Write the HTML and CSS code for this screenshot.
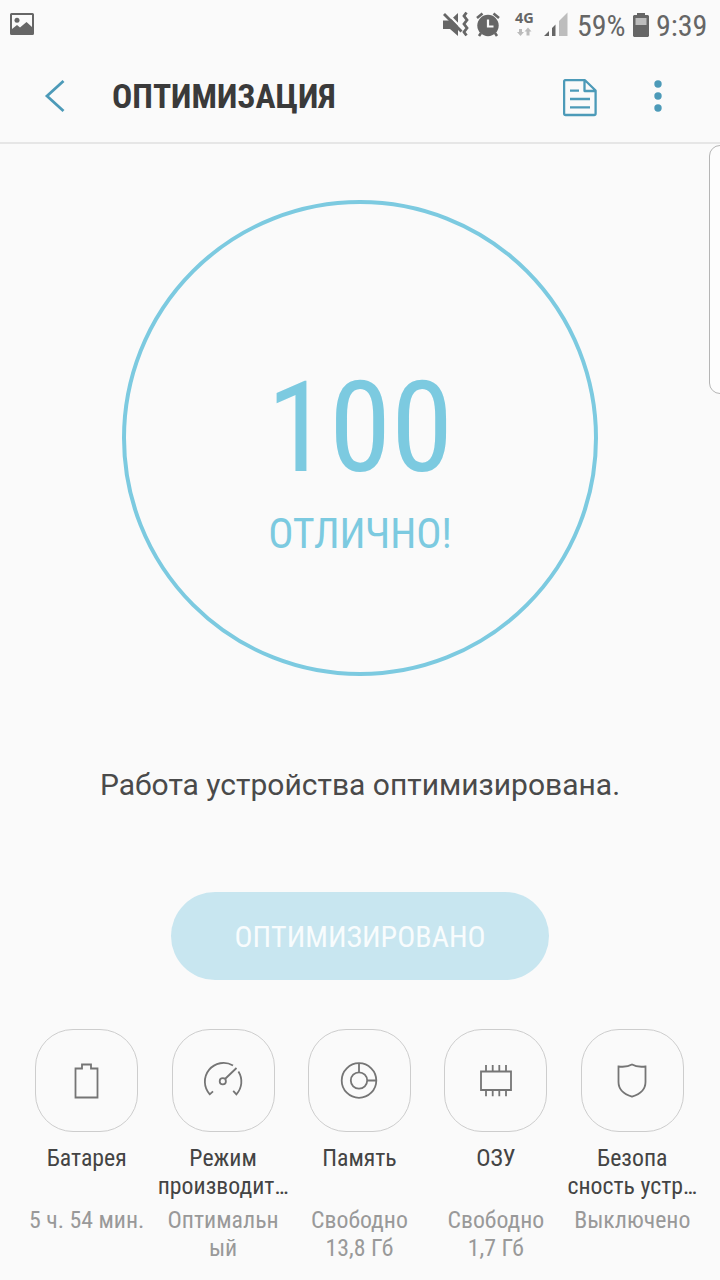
FILE: index.html
```html
<!DOCTYPE html>
<html lang="ru">
<head>
<meta charset="utf-8">
<title>Оптимизация</title>
<link rel="stylesheet" href="styles.css">
</head>
<body>
<div class="screen">
  <div class="status">
    <svg class="status-pic" width="24" height="22" viewBox="0 0 24 22"><path fill="#666" fill-rule="evenodd" d="M1.500 0h21Q24 0 24 1.500v19Q24 22 22.500 22h-21Q0 22 0 20.500v-19Q0 0 1.500 0zM2 2v14l5-4 3 2.500 6.500-5.500 5.500 5V2z"/><circle cx="7" cy="7.300" r="2.500" fill="#666"/></svg>
    <svg class="status-icons" width="140" height="28" viewBox="437 11 140 28">
      <path fill="#666" d="M443 20.500h7l8-7.500v23l-8-7h-7z"/>
      <path d="M446 12l17 17.500" stroke="#fafafa" stroke-width="2.400"/>
      <path d="M444 14l17.500 17.500" stroke="#666" stroke-width="2.800"/>
      <path d="M466.500 12.500l-2.500 3.500 3 4-3 4 3 4-3 4 2.500 3.500" fill="none" stroke="#666" stroke-width="2.800"/>
      <circle cx="488" cy="25.500" r="10.700" fill="#666"/>
      <path d="M477 18l5.500-4.500M499 18l-5.500-4.500M481 33l-2 3M495 33l2 3" stroke="#666" stroke-width="2.600"/>
      <path d="M488 19.500v7h5.500" fill="none" stroke="#fafafa" stroke-width="2.200"/>
      <path fill="#bbb" d="M519 29h3v3h2l-3.500 4-3.500-4h2zM526.500 35.500v-4h-2l3.500-4 3.500 4h-2v4z"/>
      <path fill="#666" d="M544 36l5-5v5zM552 36v-8l3.500-3.500V36z"/>
      <path fill="#bdbdbd" d="M559 36V21l8.500-8.500V36z"/>
    </svg>
    <span class="net">4G</span>
    <span class="percent">59%</span>
    <svg class="status-battery" width="16" height="24" viewBox="0 0 16 24"><path fill="#666" d="M4 0h8v2h3l1 1v20l-1 1H1l-1-1V3l1-1h3z"/><path fill="#bdbdbd" d="M2.500 5h11v7h-11z"/></svg>
    <span class="clock">9:39</span>
  </div>
  <header class="header">
    <svg class="back" width="22" height="34" viewBox="0 0 22 34"><path d="M19.500 2L3 17l16.500 15" fill="none" stroke="#4c9ab8" stroke-width="2.800"/></svg>
    <h1 class="title">ОПТИМИЗАЦИЯ</h1>
    <svg class="doc" width="34" height="38" viewBox="0 0 34 38" fill="none" stroke="#4c9ab8" stroke-width="2.300"><path stroke-linejoin="round" d="M2.600 1.200h19.400l10.600 10.300V34.500q0 1.500-1.500 1.500H2.600q-1.500 0-1.500-1.500V2.600q0-1.500 1.500-1.500zM21.500 1.500v10.500h10.500"/><path d="M7 11.700h9M7 20h20M7 28.300h20"/></svg>
    <svg class="more" width="8" height="32" viewBox="0 0 8 32" fill="#4c9ab8"><circle cx="4" cy="4" r="3.700"/><circle cx="4" cy="16" r="3.700"/><circle cx="4" cy="28" r="3.700"/></svg>
  </header>
  <main class="main">
    <div class="ring">
      <div class="score">100</div>
      <div class="verdict">ОТЛИЧНО!</div>
    </div>
    <p class="message">Работа устройства оптимизирована.</p>
    <button class="action">ОПТИМИЗИРОВАНО</button>
    <div class="tiles">
      <div class="tile">
        <div class="tile-box"><svg width="48" height="48" viewBox="0 0 48 48"><path d="M12.500 11.500h6.500v-4h9v4h6.500v29h-22z"/></svg></div>
        <div class="name">Батарея</div><div class="info">5 ч. 54 мин.</div>
      </div>
      <div class="tile">
        <div class="tile-box"><svg width="48" height="48" viewBox="0 0 48 48"><path d="M34 8.500A18.700 18.700 0 0 0 10.800 37.300l3.200-3M39.400 14.500A18.700 18.700 0 0 1 37.400 37.300l-3.200-3.500M26 22L37.500 11"/><circle cx="23.800" cy="24.300" r="3.100"/></svg></div>
        <div class="name">Режим<br>производит…</div><div class="info">Оптимальн<br>ый</div>
      </div>
      <div class="tile">
        <div class="tile-box"><svg width="48" height="48" viewBox="0 0 48 48"><circle cx="24" cy="23.500" r="17.300"/><circle cx="24" cy="23.500" r="8.200"/><path d="M24 6.200v9.100M32.200 23.500h9.100"/></svg></div>
        <div class="name">Память</div><div class="info">Свободно<br>13,8 Гб</div>
      </div>
      <div class="tile">
        <div class="tile-box"><svg width="48" height="48" viewBox="0 0 48 48"><path d="M9 14.500h30v18.500H9zM14 8v6.500M20.700 8v6.500M27.300 8v6.500M34 8v6.500M14 33v6.200M20.700 33v6.200M27.300 33v6.200M34 33v6.200"/></svg></div>
        <div class="name">ОЗУ</div><div class="info">Свободно<br>1,7 Гб</div>
      </div>
      <div class="tile">
        <div class="tile-box"><svg width="48" height="48" viewBox="0 0 48 48"><path d="M10.500 9.500Q19 10.500 24 7.500 29 10.500 37.500 9.500V25Q37.500 35.500 24 39.700 10.500 35.500 10.500 25z"/></svg></div>
        <div class="name">Безопа<br>сность устр…</div><div class="info">Выключено</div>
      </div>
    </div>
  </main>
  <div class="edge-handle"></div>
</div>
</body>
</html>
```
FILE: styles.css
```css
* { box-sizing: border-box; }
body {
  margin: 0;
  background: #fafafa;
  font-family: "Roboto Condensed", Roboto, "Liberation Sans", sans-serif;
  font-stretch: 75%;
}
.screen {
  position: relative;
  width: 720px;
  height: 1280px;
  overflow: hidden;
}
.status {
  position: relative;
  display: flex;
  align-items: center;
  height: 50px;
  padding: 0 10px;
  color: #666;
  font-size: 30px;
  white-space: nowrap;
}
.status-pic { margin-top: -2px; }
.status-icons { margin-left: 403px; }
.percent { width: 47px; }
.status-battery { margin: 0 7px 0 9px; }
/* network type sits over the data arrows */
.net {
  position: absolute;
  top: 8px;
  left: 515px;
  font: bold 14.500px/20px "Open Sans", sans-serif;
}
.header {
  display: flex;
  align-items: center;
  height: 94px;
  padding: 0 58px 0 44px;
  border-bottom: 2px solid #e6e6e6;
}
.title {
  flex: 1;
  margin: 2px 0 0 46px;
  color: #3a3a3a;
  font-size: 33.600px;
  font-weight: 700;
  line-height: 40px;
}
.doc { margin: 3px 57px 0 0; }
.main {
  display: flex;
  flex-direction: column;
  align-items: center;
  padding-top: 56px;
}
.ring {
  width: 476px;
  height: 476px;
  padding-top: 164px;
  border: 4px solid #7ccae0;
  border-radius: 50%;
  color: #7ccae0;
  text-align: center;
}
.score { font-size: 126px; line-height: 120px; }
.verdict { margin-top: 21px; font-size: 42px; line-height: 50px; }
.message {
  margin: 89px 0 0;
  color: #4a4a4a;
  font-family: Roboto, sans-serif;
  font-stretch: 100%;
  font-size: 30px;
  line-height: 40px;
}
.action {
  width: 378px;
  height: 88px;
  margin-top: 87px;
  padding: 0;
  border: 0;
  border-radius: 44px;
  background: #c8e6f0;
  color: #f8fcfd;
  font-family: inherit;
  font-stretch: inherit;
  font-size: 30px;
}
.tiles {
  display: grid;
  grid-template-columns: repeat(5, 136.400px);
  margin: 49px 1px 0 0;
}
.tile {
  display: flex;
  flex-direction: column;
  align-items: center;
  font-size: 23.800px;
  line-height: 28px;
  text-align: center;
  white-space: nowrap;
}
.tile-box {
  display: flex;
  align-items: center;
  justify-content: center;
  width: 103px;
  height: 103px;
  border: 1.500px solid #cdcdcd;
  border-radius: 38px;
}
.tile-box svg {
  fill: none;
  stroke: #757575;
  stroke-width: 1.800;
}
.name { height: 56px; margin-top: 12px; color: #444; }
.info { margin-top: 6px; color: #999; }
.edge-handle {
  position: absolute;
  top: 145px;
  right: -12px;
  width: 23px;
  height: 249px;
  border: 1.500px solid #b5b5b5;
  border-radius: 11px;
  background: #fdfdfd;
}
```
